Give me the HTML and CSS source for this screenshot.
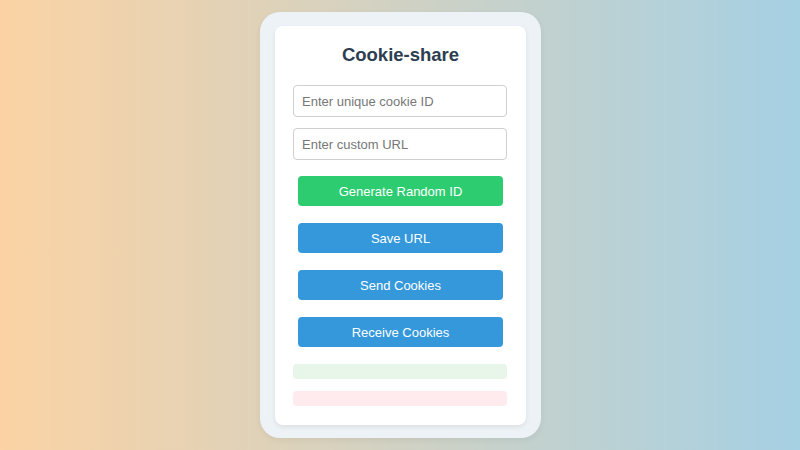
FILE: index.html
```html
<!DOCTYPE html>
<html lang="en">
<head>
    <meta charset="UTF-8">
    <meta name="viewport" content="width=device-width, initial-scale=1.0">
    <title>Cookie-share</title>
    <link rel="stylesheet" href="styles.css">
</head>
<body>
    <div class="frame">
        <div class="card">
            <h1>Cookie-share</h1>

            <!-- Campos de entrada -->
            <input id="cookieId" class="field" type="text" placeholder="Enter unique cookie ID">
            <input id="customUrl" class="field" type="text" placeholder="Enter custom URL">

            <!-- Acciones -->
            <button class="btn btn-green">Generate Random ID</button>
            <button class="btn">Save URL</button>
            <button class="btn">Send Cookies</button>
            <button class="btn">Receive Cookies</button>

            <!-- Mensajes de estado -->
            <div class="status status-ok"></div>
            <div class="status status-error"></div>
        </div>
    </div>
</body>
</html>
```

FILE: styles.css
```css
/* Estilos generales */
body {
    font-family: 'Liberation Sans', Arial, sans-serif;
    margin: 0;
    padding: 0;
    height: 450px;
    display: flex;
    align-items: flex-start;
    justify-content: center;
    background: linear-gradient(to right, #fbd3a4, #a6d0e3);
}

/* Marco exterior del popup */
.frame {
    margin-top: 12px;
    margin-left: 1px;
    width: 251px;
    padding: 14px 15px 13px 15px;
    background-color: #edf2f7;
    border-radius: 20px;
    box-shadow: 0 2px 6px rgba(0, 0, 0, 0.06);
}

.card {
    background-color: #fff;
    border-radius: 8px;
    padding: 18px 18px 19px 18px;
    display: flex;
    flex-direction: column;
    box-shadow: 0 2px 5px rgba(0, 0, 0, 0.08);
}

h1 {
    font-size: 18.5px;
    line-height: 22px;
    font-weight: bold;
    color: #2c3e50;
    text-align: center;
    margin: 0 0 19px 0;
}

/* Campos de texto */
.field {
    box-sizing: border-box;
    width: 214px;
    height: 32px;
    padding: 0 8px;
    margin: 0 0 11px 0;
    font-family: inherit;
    font-size: 13px;
    color: #333;
    border: 1px solid #cfcfcf;
    border-radius: 4px;
    background-color: #fff;
}
.field::placeholder {
    color: #777;
}
.field + .btn {
    margin-top: 5px;
}

/* Botones */
.btn {
    width: 205px;
    height: 30px;
    margin: 0 4px 17px 5px;
    padding: 0;
    border: none;
    border-radius: 4px;
    background-color: #3498db;
    color: #fff;
    font-family: inherit;
    font-size: 13px;
    cursor: pointer;
}
.btn-green {
    background-color: #2ecc71;
}

/* Mensajes */
.status {
    width: 214px;
    height: 15px;
    border-radius: 4px;
}
.status-ok {
    background-color: #e8f5e9;
}
.status-error {
    background-color: #ffebee;
    margin-top: 12px;
}
```
